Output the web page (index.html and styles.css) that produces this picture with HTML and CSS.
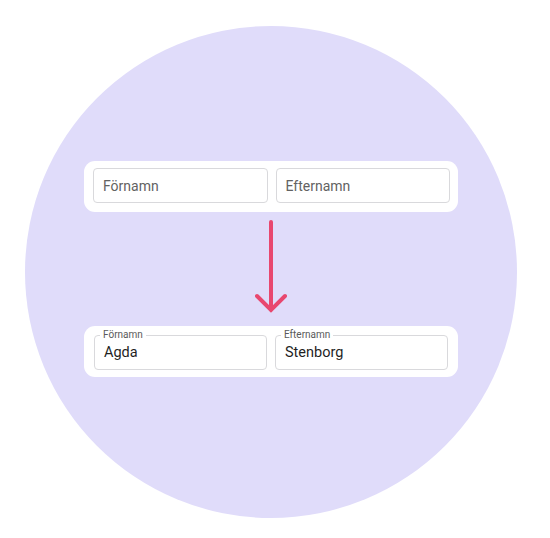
FILE: index.html
```html
<!DOCTYPE html>
<html lang="sv">
<head>
<meta charset="utf-8">
<link rel="stylesheet" href="styles.css">
</head>
<body>
<div class="circle">
  <div class="card card-empty">
    <div class="field"><span class="placeholder">Förnamn</span></div>
    <div class="field"><span class="placeholder">Efternamn</span></div>
  </div>
  <svg class="arrow" width="32" height="96" viewBox="0 0 32 96">
    <path d="M16 2 V90 M2 76 L16 90 L30 76" fill="none" stroke="#e8476f" stroke-width="4" stroke-linecap="round" stroke-linejoin="miter"/>
  </svg>
  <div class="card card-filled">
    <div class="field filled"><span class="label">Förnamn</span><span class="value">Agda</span></div>
    <div class="field filled"><span class="label">Efternamn</span><span class="value">Stenborg</span></div>
  </div>
</div>
</body>
</html>
```
FILE: styles.css
```css
html, body {
  margin: 0;
  padding: 0;
  background: #ffffff;
  font-family: Roboto, "Liberation Sans", sans-serif;
}
body {
  width: 550px;
  height: 538px;
  overflow: hidden;
}
.circle {
  margin: 26px 0 0 25px;
  width: 492px;
  height: 492px;
  border-radius: 50%;
  background: #e0dcfa;
  display: flex;
  flex-direction: column;
  align-items: center;
  padding-top: 135px;
  box-sizing: border-box;
}
.card {
  width: 374px;
  box-sizing: border-box;
  background: #ffffff;
  border-radius: 11px;
  display: flex;
  gap: 8px;
}
.card-empty {
  padding: 7px 8px 9px 9px;
}
.card-filled {
  padding: 9px 10px 7px 10px;
}
.field {
  flex: 1;
  height: 35px;
  box-sizing: border-box;
  border: 1px solid #d9d9dc;
  border-radius: 4px;
  display: flex;
  align-items: center;
  padding-left: 9px;
  position: relative;
}
.placeholder {
  font-size: 14px;
  color: #626262;
}
.value {
  font-size: 14.5px;
  color: #1f1f1f;
}
.label {
  position: absolute;
  top: -7px;
  left: 5px;
  padding: 0 3px;
  background: #ffffff;
  font-size: 10px;
  line-height: 12px;
  color: #5a5a5a;
}
.arrow {
  display: block;
  margin-top: 8px;
  margin-bottom: 10px;
}
```
